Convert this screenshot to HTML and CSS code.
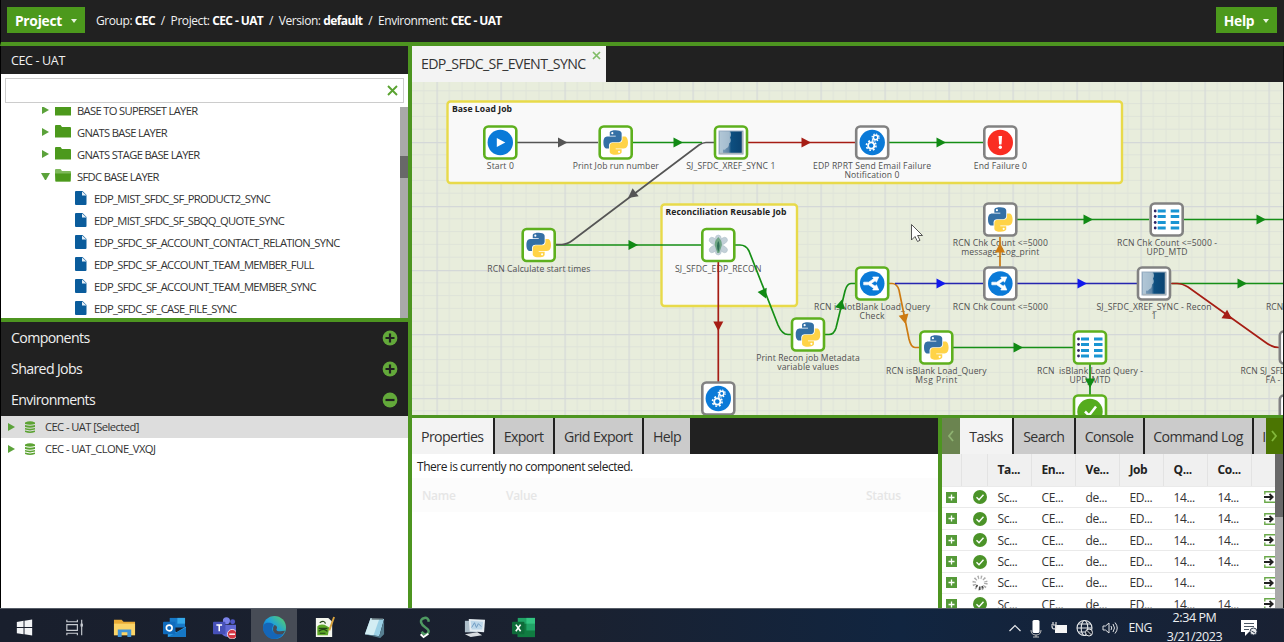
FILE: index.html
```html
<!DOCTYPE html>
<html lang="en">
<head>
<meta charset="utf-8">
<title>EDP_SFDC_SF_EVENT_SYNC</title>
<link rel="stylesheet" href="styles.css">
</head>
<body>
<svg class="defs" width="0" height="0" aria-hidden="true">
  <defs>
    <pattern id="grid" patternUnits="userSpaceOnUse" x="436.5" y="142" width="64" height="64">
      <rect width="64" height="64" fill="#e8eddc"/>
      <path d="M12.8 0V64M25.6 0V64M38.4 0V64M51.2 0V64M0 12.8H64M0 25.6H64M0 38.4H64M0 51.2H64" stroke="#dfe4d9" stroke-width="1"/>
      <path d="M.5 0V64M0 .5H64" stroke="#d4d8d8" stroke-width="1.4"/>
    </pattern>
    <linearGradient id="sky" x1="0" x2="1"><stop offset="0" stop-color="#8aa9c2"/><stop offset=".4" stop-color="#5b83a5"/><stop offset=".5" stop-color="#0d4f80"/><stop offset="1" stop-color="#0a4270"/></linearGradient>
    <linearGradient id="edgeg" x1="0" y1="1" x2="1" y2="0"><stop offset="0" stop-color="#0c59a4"/><stop offset=".5" stop-color="#1b9de2"/><stop offset="1" stop-color="#5fd65b"/></linearGradient>
    <g id="box"><rect x="-16" y="-16" width="32" height="32" rx="4" fill="#fff" stroke-width="2.6"/></g>
    <g id="python"><g transform="translate(-12.3 -12.3) scale(1.025)">
      <path fill="#3470a5" d="M11.914 0C5.82 0 6.2 2.656 6.2 2.656l.007 2.752h5.814v.826H3.9S0 5.789 0 11.969s3.403 5.96 3.403 5.96h2.03v-2.867s-.109-3.42 3.35-3.42h5.766s3.24.052 3.24-3.148V3.202S18.28 0 11.913 0zM8.708 1.85a1.05 1.05 0 1 1 0 2.1 1.05 1.05 0 0 1 0-2.1z"/>
      <path fill="#ffd347" transform="rotate(180 12 12)" d="M11.914 0C5.82 0 6.2 2.656 6.2 2.656l.007 2.752h5.814v.826H3.9S0 5.789 0 11.969s3.403 5.96 3.403 5.96h2.03v-2.867s-.109-3.42 3.35-3.42h5.766s3.24.052 3.24-3.148V3.202S18.28 0 11.913 0zM8.708 1.85a1.05 1.05 0 1 1 0 2.1 1.05 1.05 0 0 1 0-2.1z"/>
    </g></g>
    <g id="start"><circle r="12.7" fill="#0a7ad8"/><path d="M-3.5-4.5L5 0-3.5 4.500z" fill="#fff"/></g>
    <g id="gears"><circle r="12.7" fill="#0a7ad8"/><g fill="none" stroke="#fff"><circle cx="-1" cy="3" r="3.1" stroke-width="1.8"/><circle cx="-1" cy="3" r="4.8" stroke-width="1.6" stroke-dasharray="1.9 1.87"/><circle cx="3.400" cy="-5" r="2.200" stroke-width="1.500"/><circle cx="3.400" cy="-5" r="3.500" stroke-width="1.200" stroke-dasharray="1.400 1.350"/></g></g>
    <g id="fail"><circle r="12.7" fill="#fa2d22"/><path d="M-1.800-6.500H1.800L1.200 2h-2.400z" fill="#fff"/><circle cy="4.800" r="1.700" fill="#fff"/></g>
    <g id="split"><circle r="12.3" fill="#0a7ad8"/><path d="M-8.500-1.300H-3.500L1.500-4.800 .5-6.500 6.500-6.500 4.200-1.200 3-2.800-1 0 3 2.800 4.200 1.200 6.500 6.500 .5 6.500 1.500 4.800-3.500 1.300H-8.500z" fill="#fff" stroke="#fff" stroke-width=".7"/></g>
    <g id="xref"><rect x="-12" y="-11.500" width="24" height="23" fill="url(#sky)" stroke="#9fb2c4"/><path d="M-11-11H-1Q1-8-1-5Q1-1-2 1Q-2 5-5 6Q-6 8-8 7V11H-11z" fill="#c3d4e0" opacity=".7"/><path d="M11.500-11V11H-11" stroke="#a9b3bb" stroke-width="1.500" fill="none"/></g>
    <g id="list"><path d="M-9-8.500H-1M-9-3H-1M-9 3H-1M-9 8.500H-1M4-8.500H12.500M4-3H12.500M4 3H12.500M4 8.500H12.500" stroke="#1995d3" stroke-width="3"/><g fill="#2e2466"><circle cx="-11.500" cy="-8.500" r="1.400"/><circle cx="-11.500" cy="-3" r="1.400"/><circle cx="-11.500" cy="3" r="1.400"/><circle cx="-11.500" cy="8.500" r="1.400"/></g></g>
    <g id="flower"><g fill="#c3d0d8" stroke="#b3c4cc" stroke-width=".6"><ellipse cx="-5" cy="-4" rx="4.500" ry="3" transform="rotate(35 -5 -4)"/><ellipse cx="5" cy="-4" rx="4.500" ry="3" transform="rotate(-35 5 -4)"/><ellipse cx="-5" cy="4" rx="4.500" ry="3" transform="rotate(-35 -5 4)"/><ellipse cx="5" cy="4" rx="4.500" ry="3" transform="rotate(35 5 4)"/><ellipse cy="-6" rx="3" ry="4"/><ellipse cy="6" rx="3" ry="4"/></g><path d="M0-8Q5-3 3 2L1 8H-1L-3 2Q-5-3 0-8" fill="#6fa585"/><path d="M0-4Q2.500 0 0 7Q-2.500 0 0-4" fill="#2e6e55"/></g>
    <g id="ok"><circle r="12.700" fill="#55ac1e"/><path d="M-5 0L-1 4 6-5" fill="none" stroke="#fff" stroke-width="2.500"/></g>
    <path id="arrow" d="M-4.500-5L5 0-4.500 5z"/>
    <symbol id="folder" viewBox="0 0 16 14"><path d="M0 1Q0 0 1 0H5.500L7 2H15Q16 2 16 3V12.500H0z" fill="#4c991c"/></symbol>
    <symbol id="folder-open" viewBox="0 0 16 14"><path d="M0 1Q0 0 1 0H5.500L7 2H15Q16 2 16 3V12.500H0z" fill="#7eb95b"/><path d="M0 4.500H16L15 12.500H1z" fill="#4c991c"/></symbol>
    <symbol id="doc" viewBox="0 0 12 14"><path d="M1 0H7.500L11.500 4V13Q11.500 14 10.500 14H1Q0 14 0 13V1Q0 0 1 0z" fill="#0a5c9c"/><path d="M7 .5V4.500H11.500z" fill="#e6eff7"/></symbol>
    <symbol id="db" viewBox="0 0 10 12"><path d="M0 1.500Q5-1 10 1.500V3Q5 4.600 0 3zM0 4Q5 5.600 10 4V6Q5 7.600 0 6zM0 7Q5 8.600 10 7V8.600Q5 10.200 0 8.600zM0 9.600Q5 11.200 10 9.600V11Q5 12.800 0 11z" fill="#5ca333"/></symbol>
    <symbol id="plus" viewBox="0 0 16 16"><circle cx="8" cy="8" r="7.400" fill="#63a93a"/><path d="M3.500 8H12.500M8 3.500V12.500" stroke="#212121" stroke-width="2.200"/></symbol>
    <symbol id="minus" viewBox="0 0 16 16"><circle cx="8" cy="8" r="7.400" fill="#63a93a"/><path d="M3.500 8H12.500" stroke="#212121" stroke-width="2.200"/></symbol>
    <symbol id="add" viewBox="0 0 11 11"><rect width="11" height="11" fill="#559a38"/><path d="M2.500 5.500H8.500M5.500 2.500V8.500" stroke="#fff" stroke-width="1.300"/></symbol>
    <symbol id="done" viewBox="0 0 14 14"><circle cx="7" cy="7" r="7" fill="#4b9328"/><path d="M3.500 7.300L6 9.700 10.500 4.800" stroke="#fff" stroke-width="1.400" fill="none"/></symbol>
    <symbol id="spin" viewBox="0 0 16 16"><circle cx="8" cy="8" r="5.800" fill="none" stroke="#aaa" stroke-width="3.600" stroke-dasharray="1.300 1.740"/><path d="M4 12L5.500 10M7.800 15V11.500M11.300 13.500L10 11" stroke="#444" stroke-width="1.500"/></symbol>
    <symbol id="go" viewBox="0 0 11 12"><path d="M11 .8H.8V3.500M.8 8.500V11.200H11" fill="none" stroke="#6aa94a" stroke-width="1.400"/><path d="M0 6H8M5.500 3L8.700 6 5.500 9" fill="none" stroke="#222" stroke-width="1.800"/></symbol>
  </defs>
</svg>

<div class="app">
  <header class="topbar">
    <button class="btn project">Project<i class="caret"></i></button>
    <div class="crumbs">Group: <b>CEC</b><s>/</s>Project: <b>CEC - UAT</b><s>/</s>Version: <b>default</b><s>/</s>Environment: <b>CEC - UAT</b></div>
    <button class="btn help">Help<i class="caret"></i></button>
  </header>

  <main class="work">
    <aside class="side">
      <h2 class="side-title">CEC - UAT</h2>
      <div class="search"><svg width="11" height="11" viewBox="0 0 11 11"><path d="M1 1L10 10M10 1L1 10" stroke="#5aa331" stroke-width="1.900"/></svg></div>
      <div class="tree">
        <ul class="rows">
          <li><i class="tri"></i><svg class="fold"><use href="#folder"/></svg><span>BASE TO SUPERSET LAYER</span></li>
          <li><i class="tri"></i><svg class="fold"><use href="#folder"/></svg><span>GNATS BASE LAYER</span></li>
          <li><i class="tri"></i><svg class="fold"><use href="#folder"/></svg><span>GNATS STAGE BASE LAYER</span></li>
          <li><i class="tri down"></i><svg class="fold"><use href="#folder-open"/></svg><span>SFDC BASE LAYER</span></li>
          <li class="leaf"><svg class="doc"><use href="#doc"/></svg><span>EDP_MIST_SFDC_SF_PRODUCT2_SYNC</span></li>
          <li class="leaf"><svg class="doc"><use href="#doc"/></svg><span>EDP_MIST_SFDC_SF_SBQQ_QUOTE_SYNC</span></li>
          <li class="leaf"><svg class="doc"><use href="#doc"/></svg><span>EDP_SFDC_SF_ACCOUNT_CONTACT_RELATION_SYNC</span></li>
          <li class="leaf"><svg class="doc"><use href="#doc"/></svg><span>EDP_SFDC_SF_ACCOUNT_TEAM_MEMBER_FULL</span></li>
          <li class="leaf"><svg class="doc"><use href="#doc"/></svg><span>EDP_SFDC_SF_ACCOUNT_TEAM_MEMBER_SYNC</span></li>
          <li class="leaf"><svg class="doc"><use href="#doc"/></svg><span>EDP_SFDC_SF_CASE_FILE_SYNC</span></li>
        </ul>
        <div class="scroll"><div class="thumb"></div></div>
      </div>
      <div class="sections">
        <div><span>Components</span><svg><use href="#plus"/></svg></div>
        <div><span>Shared Jobs</span><svg><use href="#plus"/></svg></div>
        <div><span>Environments</span><svg><use href="#minus"/></svg></div>
      </div>
      <ul class="envs">
        <li class="sel"><i class="tri"></i><svg><use href="#db"/></svg><span>CEC - UAT [Selected]</span></li>
        <li><i class="tri"></i><svg><use href="#db"/></svg><span>CEC - UAT_CLONE_VXQJ</span></li>
      </ul>
    </aside>

    <section class="content">
      <div class="tabs"><div class="tab job on"><span>EDP_SFDC_SF_EVENT_SYNC</span><svg class="close" width="9" height="9" viewBox="0 0 9 9"><path d="M1 1L8 8M8 1L1 8" stroke="#81bd67" stroke-width="1.700"/></svg></div></div>
      <svg class="canvas" viewBox="412 82 870.500 333" width="870.500" height="333">
        <rect x="411" y="82" width="872" height="333" fill="url(#grid)"/>
        <g fill="#f9f9f9" stroke="#e8da4a" stroke-width="2.400">
          <rect x="447.500" y="101.500" width="674.500" height="81.500" rx="3"/>
          <rect x="661.500" y="204.500" width="135.500" height="101.500" rx="3"/>
        </g>
        <g class="note"><text x="452" y="112" textLength="60">Base Load Job</text><text x="665.500" y="215" textLength="121">Reconciliation Reusable Job</text></g>
        <g class="label">
          <text x="500.300" y="169" textLength="27">Start 0</text>
          <text x="615.800" y="169" textLength="86">Print Job run number</text>
          <text x="730.800" y="169" textLength="89">SJ_SFDC_XREF_SYNC 1</text>
          <text x="872" y="169" textLength="118">EDP RPRT Send Email Failure</text><text x="872" y="178" textLength="55">Notification 0</text>
          <text x="1000.300" y="169" textLength="53">End Failure 0</text>
          <text x="538.800" y="272" textLength="103">RCN Calculate start times</text>
          <text x="718.200" y="272" textLength="86.500">SJ_SFDC_EDP_RECON</text>
          <text x="808" y="361" textLength="103.500">Print Recon job Metadata</text><text x="808" y="370" textLength="61.500">variable values</text>
          <text x="872" y="310" textLength="116">RCN isNotBlank Load_Query</text><text x="872" y="319" textLength="25">Check</text>
          <text x="1000.300" y="246" textLength="95">RCN Chk Count &lt;=5000</text><text x="1000.300" y="255" textLength="78">message_Log_print</text>
          <text x="1000.300" y="310" textLength="95">RCN Chk Count &lt;=5000</text>
          <text x="1167" y="246" textLength="100">RCN Chk Count &lt;=5000 -</text><text x="1167" y="255" textLength="41">UPD_MTD</text>
          <text x="1154" y="310" textLength="115">SJ_SFDC_XREF_SYNC - Recon</text><text x="1154" y="319">1</text>
          <text x="936.300" y="374" textLength="100.500">RCN isBlank Load_Query</text><text x="936.300" y="383" textLength="42">Msg Print</text>
          <text x="1090" y="374" textLength="106" xml:space="preserve">RCN  isBlank Load Query -</text><text x="1090" y="383" textLength="41">UPD_MTD</text>
          <g class="from"><text x="1266" y="310">RCN</text><text x="1240.500" y="374">RCN SJ_SFDC</text><text x="1265.500" y="383">FA -</text></g>
        </g>
        <g class="wires">
          <g stroke="#168f16"><path d="M633 142.500H702M889 142.500H983M556 245H701M735 245H740Q746 245 749 251L778 325Q782 334.500 788 334.500H791M825 334.500H829Q834 334.500 836 328L845 291Q847 283.500 851 283.500H855M1017 219.500H1149M1184 219.500H1283M1172 283.500H1283M953 347.500H1073M1090 364V395"/></g>
          <g stroke="#555"><path d="M517 142.500H598M714 142.500H706Q703 142.500 699 145L573 240Q567 244.500 562 244.500H556"/></g>
          <g stroke="#a61d14"><path d="M748 142.500H855M718.300 262V382M1171 283.500H1177Q1182 283.500 1188 287L1265 342Q1272 347.500 1279 347.500"/></g>
          <g stroke="#cd7b12"><path d="M889 283.500H892Q897 283.500 899 290L909 339Q911 347.500 915 347.500H920M1000 267V237"/></g>
          <g stroke="#2626b0"><path d="M895 283.500H983M1017 283.500H1137"/></g>
        </g>
        <g fill="#118a14"><use href="#arrow" x="678" y="142.500"/><use href="#arrow" x="941" y="142.500"/><use href="#arrow" x="633" y="245"/><use href="#arrow" transform="translate(764 294) rotate(66)"/><use href="#arrow" transform="translate(841 304) rotate(-76)"/><use href="#arrow" x="1088" y="219.500"/><use href="#arrow" x="1261" y="219.500"/><use href="#arrow" x="1242" y="283.500"/><use href="#arrow" x="1018" y="347.500"/><use href="#arrow" transform="translate(1090 383) rotate(90)"/></g>
        <g fill="#555"><use href="#arrow" x="562.500" y="142.500"/><use href="#arrow" transform="translate(632 195) rotate(143)"/></g>
        <g fill="#a61d14"><use href="#arrow" x="806" y="142.500"/><use href="#arrow" transform="translate(718.300 326) rotate(90)"/><use href="#arrow" transform="translate(1228 316.500) rotate(34)"/></g>
        <g fill="#cd7b12"><use href="#arrow" transform="translate(904.500 319) rotate(78)"/><use href="#arrow" transform="translate(1000 248) rotate(-90)"/></g>
        <g fill="#1018ee"><use href="#arrow" x="941" y="283.500"/><use href="#arrow" x="1082" y="283.500"/></g>
        <g stroke="#5eb01e"><use href="#box" x="500.300" y="142.500"/><use href="#box" x="615.700" y="142.500"/><use href="#box" x="731" y="142.500"/><use href="#box" x="538.700" y="245"/><use href="#box" x="718.300" y="245"/><use href="#box" x="808" y="334.500"/><use href="#box" x="872.200" y="283.500"/><use href="#box" x="936.300" y="347.500"/><use href="#box" x="1090" y="347.500"/><use href="#box" x="1090" y="411.500"/></g>
        <g stroke="#828282"><use href="#box" x="872.200" y="142.500"/><use href="#box" x="1000.300" y="142.500"/><use href="#box" x="1000.300" y="219.500"/><use href="#box" x="1000.300" y="283.500"/><use href="#box" x="1166.700" y="219.500"/><use href="#box" x="1154" y="283.500"/><use href="#box" x="718.300" y="398.500"/><use href="#box" x="1295.800" y="347.500"/><use href="#box" x="1295.800" y="411.500"/></g>
        <use href="#start" x="500.300" y="142.500"/><use href="#python" x="615.700" y="142.500"/><use href="#xref" x="731" y="142.500"/><use href="#gears" x="872.200" y="142.500"/><use href="#fail" x="1000.300" y="142.500"/>
        <use href="#python" x="538.700" y="245"/><use href="#flower" x="718.300" y="245"/><use href="#python" x="808" y="334.500"/><use href="#split" x="872.200" y="283.500"/><use href="#split" x="1000.300" y="283.500"/><use href="#python" x="1000.300" y="219.500"/><use href="#list" x="1166.700" y="219.500"/><use href="#xref" x="1154" y="283.500"/><use href="#python" x="936.300" y="347.500"/><use href="#list" x="1090" y="347.500"/><use href="#ok" x="1090" y="411.500"/><use href="#gears" x="718.300" y="398.500"/>
        <path d="M911.500 224.500V240L915 236.500 917.500 241.500 920 240.300 917.600 235.500H922.500z" fill="#fff" stroke="#444" stroke-width=".9"/>
      </svg>

      <div class="lower">
        <section class="props">
          <div class="tabs"><div class="tab on w80">Properties</div><div class="tab w58">Export</div><div class="tab w88">Grid Export</div><div class="tab w46">Help</div></div>
          <p class="msg">There is currently no component selected.</p>
          <div class="ghost"><span>Name</span><span>Value</span><span>Status</span></div>
        </section>
        <section class="tasks">
          <div class="tabs"><div class="nav prev"><svg width="8" height="12" viewBox="0 0 8 12"><path d="M6 1L2 6 6 11" fill="none" stroke="#8eb271" stroke-width="1.800"/></svg></div><div class="tab on w52">Tasks</div><div class="tab w60">Search</div><div class="tab w67">Console</div><div class="tab w107">Command Log</div><div class="tab rest">I</div><div class="nav next"><svg width="8" height="12" viewBox="0 0 8 12"><path d="M2 1L6 6 2 11" fill="none" stroke="#83b83b" stroke-width="1.800"/></svg></div></div>
          <div class="gridwrap">
            <div class="table">
              <div class="tr th"><span></span><span></span><span>Ta...</span><span>En...</span><span>Ve...</span><span>Job</span><span>Q...</span><span>Co...</span><span></span></div>
              <div class="tr"><svg class="a"><use href="#add"/></svg><svg class="d"><use href="#done"/></svg><span>Sc...</span><span>CE...</span><span>de...</span><span>ED...</span><span>14...</span><span>14...</span><svg class="g"><use href="#go"/></svg></div>
              <div class="tr"><svg class="a"><use href="#add"/></svg><svg class="d"><use href="#done"/></svg><span>Sc...</span><span>CE...</span><span>de...</span><span>ED...</span><span>14...</span><span>14...</span><svg class="g"><use href="#go"/></svg></div>
              <div class="tr"><svg class="a"><use href="#add"/></svg><svg class="d"><use href="#done"/></svg><span>Sc...</span><span>CE...</span><span>de...</span><span>ED...</span><span>14...</span><span>14...</span><svg class="g"><use href="#go"/></svg></div>
              <div class="tr"><svg class="a"><use href="#add"/></svg><svg class="d"><use href="#done"/></svg><span>Sc...</span><span>CE...</span><span>de...</span><span>ED...</span><span>14...</span><span>14...</span><svg class="g"><use href="#go"/></svg></div>
              <div class="tr"><svg class="a"><use href="#add"/></svg><svg class="d s"><use href="#spin"/></svg><span>Sc...</span><span>CE...</span><span>de...</span><span>ED...</span><span>14...</span><span></span><svg class="g"><use href="#go"/></svg></div>
              <div class="tr"><svg class="a"><use href="#add"/></svg><svg class="d"><use href="#done"/></svg><span>Sc...</span><span>CE...</span><span>de...</span><span>ED...</span><span>14...</span><span>14...</span><svg class="g"><use href="#go"/></svg></div>
            </div>
            <div class="scroll"><div class="thumb"></div></div>
          </div>
        </section>
      </div>
    </section>
  </main>

  <footer class="taskbar">
    <div class="apps">
      <i><svg viewBox="0 0 24 24"><path d="M4 6.200L11 5V11.500H4zM12 4.900L20 3.700V11.500H12zM4 12.500H11V19L4 17.900zM12 12.500H20V20.300L12 19.100z" fill="#f2f4f6"/></svg></i>
      <i><svg viewBox="0 0 24 24" fill="none" stroke="#c8ccd2" stroke-width="1.200"><path d="M4 4V6H15V4M4 20V18H15V20M4 9H15V15H4zM19.500 4V20"/><path d="M19.500 8V11" stroke-width="2.500"/></svg></i>
      <i><svg viewBox="0 0 24 24"><path d="M1 4H9L11 6H23V20H1z" fill="#e9ab36"/><path d="M1 8H23V20H1z" fill="#fbd468"/><path d="M5 14H19V22H15V17H9V22H5z" fill="#3f93d8"/></svg></i>
      <i><svg viewBox="0 0 24 24"><path d="M7 2H23V12H7z" fill="#1779c8"/><path d="M15 2H23V8H15z" fill="#35a9ea"/><path d="M5 11L14 17 24 11V22H5z" fill="#2ea0e8"/><path d="M5 22L24 12V22z" fill="#1677c5"/><rect y="6" width="13" height="13" rx="1" fill="#0f6bbd"/><circle cx="6.500" cy="12.500" r="3" fill="none" stroke="#fff" stroke-width="1.700"/></svg></i>
      <i><svg viewBox="0 0 24 24"><circle cx="14" cy="5" r="3.700" fill="#7b83eb"/><circle cx="20.500" cy="6" r="2.600" fill="#5059c9"/><path d="M9 9H24V18Q21 22 16 22T9 18z" fill="#6169d5"/><rect y="6" width="13" height="13" rx="1" fill="#4650b8"/><path d="M3.500 9.500H9.500M6.500 9.500V16" stroke="#fff" stroke-width="1.600"/><circle cx="20" cy="19" r="5" fill="#d43642" stroke="#fff" stroke-width=".8"/><path d="M17 19H23" stroke="#fff" stroke-width="1.500"/></svg></i>
      <i class="active"><svg viewBox="0 0 24 24"><circle cx="12" cy="12" r="12" fill="url(#edgeg)"/><path d="M0 12C0 8 4 6 9 7.500C13 9 10 10 9.500 13C9 17 13 19.500 21 19C17 24 11 24.500 8 23.300C4 22 0 17 0 12z" fill="#1566b8"/><path d="M12 9.500Q16 11 14 14Q14 17 23 15.500Q22 18 20.500 19Q12 20 10.500 15Q10 11 12 9.500z" fill="#474c56"/></svg></i>
      <i><svg viewBox="0 0 24 24"><path d="M3 2H16L20 6V22H3z" fill="#f4f6ee"/><path d="M4.500 11Q6 8 12 9L17 12 15.500 20H4.500z" fill="#5fa928"/><path d="M7 7Q12 4 13 8M6 13H15M6 16Q11 12 15 16M7 18H13" fill="none" stroke="#234516" stroke-width="1.300"/><path d="M22 1L17 15" stroke="#d9a33e" stroke-width="2"/></svg></i>
      <i><svg viewBox="0 0 24 24"><path d="M8 2L22 3 17 21 2 19z" fill="#9bd0e5"/><path d="M8 2L17 3 11 20 2 19z" fill="#d3edf3"/><path d="M2 19L17 21 22 4V19L18 23z" fill="#577f91"/><path d="M9 3H21" stroke="#526068" stroke-width="1.500"/></svg></i>
      <i><svg viewBox="0 0 24 24"><path d="M16.500 6Q16 1.500 12 2Q7.500 3 8.500 7Q9.500 10 13 12Q18 15 15.500 18Q12 21 9 16.500" fill="none" stroke="#4f9a62" stroke-width="2.600"/><path d="M8 19L11 22 16 18.500" fill="none" stroke="#fff" stroke-width="2"/></svg></i>
      <i><svg viewBox="0 0 24 24"><path d="M2 5H15V17H2z" fill="#aebfca"/><path d="M6 3L23 4 22 17 7 16z" fill="#e5edf2"/><path d="M8 5L21 6 20 14 9 14z" fill="#bcd7e9"/><path d="M9 12L12 7 14 12 16 8 19 11" fill="none" stroke="#6d9ac1"/><path d="M2 19L15 17 20 20 8 22z" fill="#d9dde0"/></svg></i>
      <i><svg viewBox="0 0 24 24"><path d="M6 2H24V22H6z" fill="#21a366"/><path d="M15 2H24V8H15z" fill="#33c481"/><path d="M6 8H15V15H6zM15 15H24V22H6V15z" fill="#107c41"/><rect y="6" width="13" height="13" rx="1" fill="#0e6b39"/><path d="M4 9L9 16M9 9L4 16" stroke="#fff" stroke-width="1.700"/></svg></i>
    </div>
    <div class="tray">
      <svg width="14" height="20" viewBox="0 0 14 20"><path d="M1.500 13L7 7.500 12.500 13" fill="none" stroke="#e8eaed" stroke-width="1.200"/></svg>
      <svg width="12" height="20" viewBox="0 0 12 20"><rect x="2.500" y="2" width="7" height="13" rx="1.500" fill="#fff"/><path d="M1 12Q1 17 6 17T11 12M6 17V19M3 19H9" fill="none" stroke="#bbb"/></svg>
      <svg width="17" height="20" viewBox="0 0 17 20"><path d="M4 7H16V15H4z" fill="#f5f5f5"/><path d="M0 7H5M2 4V7M5 4V9Q5 11 3 11T1 8" fill="none" stroke="#ddd" stroke-width="1.200"/></svg>
      <svg width="17" height="20" viewBox="0 0 17 20"><g fill="none" stroke="#e6e8ea" stroke-width="1.100"><circle cx="8.500" cy="10" r="7.500"/><ellipse cx="8.500" cy="10" rx="3.300" ry="7.500"/><path d="M1 10H16M2 6H15M2 14H10"/></g><circle cx="13" cy="14.500" r="3.500" fill="#18202e" stroke="#e6e8ea"/><path d="M10.500 12L15.500 17" stroke="#e6e8ea"/></svg>
      <svg width="16" height="20" viewBox="0 0 16 20" fill="none" stroke="#e0e2e5"><path d="M1 8H3.500L7 5V15L3.500 12H1z"/><path d="M9 8Q10.500 10 9 12M11 6Q14 10 11 14M13 4.500Q17.500 10 13 15.500"/></svg>
      <span class="lang">ENG</span>
      <div class="clock"><span>2:34 PM</span><span>3/21/2023</span></div>
      <svg width="18" height="20" viewBox="0 0 18 20"><path d="M1 2H17V14H9L5 18V14H1z" fill="#fff"/><path d="M4 5.500H14M4 8.500H14M4 11.500H9" stroke="#4d5866" stroke-width="1.100"/><circle cx="13.500" cy="13.500" r="3.500" fill="#e8eaec" stroke="#344052"/><path d="M11.500 13L15 15" stroke="#344052"/></svg>
    </div>
  </footer>
</div>
</body>
</html>
```
FILE: styles.css
```css
* { box-sizing: border-box; }
body { margin: 0; font-family: "Open Sans", "Noto Sans", sans-serif; background: #000; color: #333; }
ul, p, h2 { margin: 0; padding: 0; list-style: none; }
.defs { display: block; position: absolute; }
.app { width: 1284px; height: 642px; overflow: hidden; display: flex; flex-direction: column; }
.topbar { height: 46px; flex: none; background: #212121; border-bottom: 4px solid #4d9520; border-left: 1px solid #000; display: flex; align-items: center; padding: 0 7px 2px 6px; }
.btn { border: 0; background: #4c991c; color: #fff; font-family: inherit; font-weight: 700; font-size: 13.800px; letter-spacing: -.25px; height: 26px; display: flex; align-items: center; justify-content: center; gap: 9px; padding: 0; white-space: nowrap; }
.project { width: 78px; }
.help { width: 61px; margin-left: auto; }
.caret { border: 3.5px solid transparent; border-top: 4px solid #e8f4df; border-bottom: 0; margin-top: 2px; }
.crumbs { margin-left: 11px; color: #f1f1f1; font-size: 12px; letter-spacing: -.43px; white-space: nowrap; }
.crumbs b { font-weight: 700; color: #fff; letter-spacing: -.6px; }
.crumbs s { text-decoration: none; margin: 0 5.800px; }
.work { flex: none; height: 561.500px; display: flex; border-left: 1px solid #000; border-right: 1.500px solid #111; background: #fff; }
.side { width: 411px; flex: none; border-right: 4px solid #4d9520; display: flex; flex-direction: column; }
.side-title { height: 27.500px; background: #212121; color: #f1f1f1; font-size: 12.500px; letter-spacing: -.35px; font-weight: 400; line-height: 29px; padding-left: 10px; }
.search { height: 25px; margin: 4.500px 4px 4px 4px; border: 1px solid #ccc; display: flex; align-items: center; justify-content: flex-end; padding-right: 5px; flex: none; }
.tree { height: 211px; overflow: hidden; display: flex; justify-content: space-between; flex: none; }
.rows { margin-top: -8px; }
.rows li { height: 22px; display: flex; align-items: center; padding-left: 41px; font-size: 11.200px; letter-spacing: -.67px; white-space: nowrap; }
.rows li.leaf { padding-left: 74px; }
.tri { width: 7px; border: 4.500px solid transparent; border-left: 7px solid #5ba23a; border-right: 0; }
.tri.down { width: 9px; border: 4.500px solid transparent; border-top: 7px solid #5ba23a; border-bottom: 0; margin: 0 -1px; }
.fold { width: 16px; height: 14px; margin: 0 6px 0 6px; }
.doc { width: 12px; height: 14px; margin-right: 7px; }
.scroll { width: 8px; background: #a9a9a9; flex: none; }
.thumb { background: #686868; }
.tree .thumb { height: 22px; margin-top: 49px; }
.sections { border-top: 4px solid #4d9520; background: #212121; height: 97.500px; color: #efefef; font-size: 14.200px; letter-spacing: -.65px; flex: none; }
.sections div { height: 31px; display: flex; align-items: center; justify-content: space-between; padding: 0 10px 0 10px; }
.sections svg { width: 16px; height: 16px; }
.envs li { height: 22px; display: flex; align-items: center; padding-left: 7px; font-size: 11.200px; letter-spacing: -.58px; }
.envs svg { width: 10px; height: 12px; margin: 0 10px; }
.envs .sel { background: #ddd; }
.content { flex: 1; min-width: 0; display: flex; flex-direction: column; }
.tabs { height: 36px; background: #212121; display: flex; gap: 2px; flex: none; overflow: hidden; }
.tab { background: #cbcbcb; font-size: 14.200px; letter-spacing: -.62px; color: #333; display: flex; justify-content: center; align-items: center; white-space: nowrap; flex: none; }
.tab.on { background: #f3f3f3; }
.job { width: 194px; letter-spacing: -.66px; padding: 0 5px 1px 9px; justify-content: space-between; }
.close { align-self: flex-start; margin-top: 5px; }
.w80 { width: 80.500px; } .w58 { width: 58px; } .w88 { width: 87.500px; } .w46 { width: 46px; }
.w52 { width: 52px; } .w60 { width: 59.500px; } .w67 { width: 67px; } .w107 { width: 107px; }
.canvas { display: block; flex: none; }
.note { font: 700 8.600px "Open Sans", sans-serif; fill: #222; }
.label { font: 8.600px "Open Sans", sans-serif; fill: #505050; text-anchor: middle; }
.label .from { text-anchor: start; }
.wires { fill: none; stroke-width: 1.700; }
.lower { border-top: 3.500px solid #4d9520; flex: 1; min-height: 0; display: flex; }
.props { width: 530px; border-right: 4px solid #4d9520; flex: none; }
.msg { height: 24px; line-height: 25px; font-size: 12px; letter-spacing: -.48px; padding-left: 5px; color: #222; }
.ghost { height: 34px; background: #fcfcfc; font-size: 12px; letter-spacing: -.3px; font-weight: 600; color: #e6e6e6; display: grid; grid-template-columns: 84px 360px 1fr; align-items: center; padding-left: 10px; }
.tasks { flex: 1; min-width: 0; }
.nav { display: flex; align-items: center; justify-content: center; flex: none; }
.prev { width: 18px; background: #6b8450; margin-right: -2px; }
.next { width: 17.500px; background: #4b7502; margin-left: auto; }
.rest { width: 12px; margin-right: -2px; justify-content: flex-end; }
.gridwrap { display: flex; height: 154px; overflow: hidden; }
.table { flex: 1; min-width: 0; overflow: hidden; }
.tr { display: grid; grid-template-columns: 20px 26px repeat(6, 44px) 24px; height: 21.450px; align-items: center; border-bottom: 1px solid #eaeaea; font-size: 12px; letter-spacing: -.4px; }
.tr span { padding-left: 9.500px; white-space: nowrap; }
.th { height: 33px; background: #f0f0f0; font-weight: 700; color: #222; font-size: 12px; }
.th span { border-right: 1px solid #e3e3e3; height: 100%; line-height: 32px; }
.a { width: 11px; height: 11px; margin-left: 3.500px; }
.d { width: 14px; height: 14px; margin-left: 11px; }
.d.s { width: 16px; height: 16px; margin-left: 10px; }
.g { width: 11px; height: 12px; margin-left: 12px; }
.gridwrap .thumb { height: 63px; }
.taskbar { flex: 1; background: linear-gradient(90deg, #191f2d, #1a2130 45%, #112540 70%, #192133); border-top: 1px solid #555c66; display: flex; justify-content: space-between; }
.apps { display: flex; }
.apps i { width: 49.900px; height: 34px; display: flex; align-items: center; justify-content: center; padding-top: 4px; }
.apps svg { width: 23px; height: 23px; }
.apps .active { background: #474c56; width: 46px; margin: 0 2px; }
.tray { display: flex; align-items: center; height: 38px; gap: 8.500px; padding: 0 26px 0 0; color: #eef0f3; }
.tray svg { flex: none; }
.lang { font-size: 12.200px; letter-spacing: -.4px; margin-left: 2px; }
.clock { font-size: 12.500px; letter-spacing: -.4px; line-height: 18.500px; display: flex; flex-direction: column; align-items: center; width: 58px; margin: 0 8px 0 5px; }
```
